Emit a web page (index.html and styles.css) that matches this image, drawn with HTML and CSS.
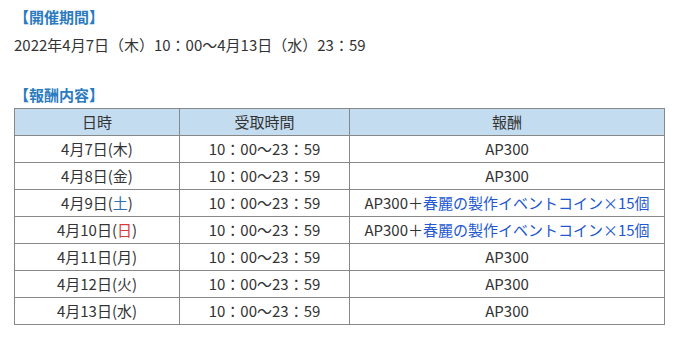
FILE: index.html
```html
<!DOCTYPE html>
<html lang="ja">
<head>
<meta charset="utf-8">
<link rel="stylesheet" href="styles.css">
</head>
<body>
<div class="page">
  <h3 class="label">【開催期間】</h3>
  <p class="period">2022年4月7日（木）10：00～4月13日（水）23：59</p>
  <h3 class="label label-second">【報酬内容】</h3>
  <table class="rewards">
    <colgroup>
      <col class="c-date">
      <col class="c-time">
      <col class="c-reward">
    </colgroup>
    <thead>
      <tr><th>日時</th><th>受取時間</th><th>報酬</th></tr>
    </thead>
    <tbody>
      <tr><td>4月7日(木)</td><td>10：00～23：59</td><td>AP300</td></tr>
      <tr><td>4月8日(金)</td><td>10：00～23：59</td><td>AP300</td></tr>
      <tr><td>4月9日(<span class="sat">土</span>)</td><td>10：00～23：59</td><td>AP300＋<span class="item">春麗の製作イベントコイン×15個</span></td></tr>
      <tr><td>4月10日(<span class="sun">日</span>)</td><td>10：00～23：59</td><td>AP300＋<span class="item">春麗の製作イベントコイン×15個</span></td></tr>
      <tr><td>4月11日(月)</td><td>10：00～23：59</td><td>AP300</td></tr>
      <tr><td>4月12日(火)</td><td>10：00～23：59</td><td>AP300</td></tr>
      <tr><td>4月13日(水)</td><td>10：00～23：59</td><td>AP300</td></tr>
    </tbody>
  </table>
</div>
</body>
</html>
```

FILE: styles.css
```css
html, body {
  margin: 0;
  padding: 0;
  background: #ffffff;
}
.page {
  padding: 3px 14px 0 14px;
  font-family: "Noto Sans CJK JP", "Noto Sans", sans-serif;
  font-size: 15px;
  color: #333333;
}
.label {
  margin: 0;
  font-size: 15px;
  font-weight: bold;
  line-height: 28px;
  color: #2b7bbf;
}
.period {
  margin: 0;
  line-height: 28px;
}
.label-second {
  margin-top: 23px;
  line-height: 26px;
}
.rewards {
  border-collapse: collapse;
  width: 650px;
  table-layout: fixed;
}
.c-date { width: 165px; }
.c-time { width: 170px; }
.c-reward { width: 315px; }
.rewards th,
.rewards td {
  border: 1px solid #888888;
  text-align: center;
  padding: 3px 4px;
  line-height: 20px;
  font-weight: normal;
  white-space: nowrap;
}
.rewards th {
  background: #c4dcf0;
}
.sat { color: #2b6fb5; }
.sun { color: #d83a3a; }
.item { color: #2357d0; }
```
